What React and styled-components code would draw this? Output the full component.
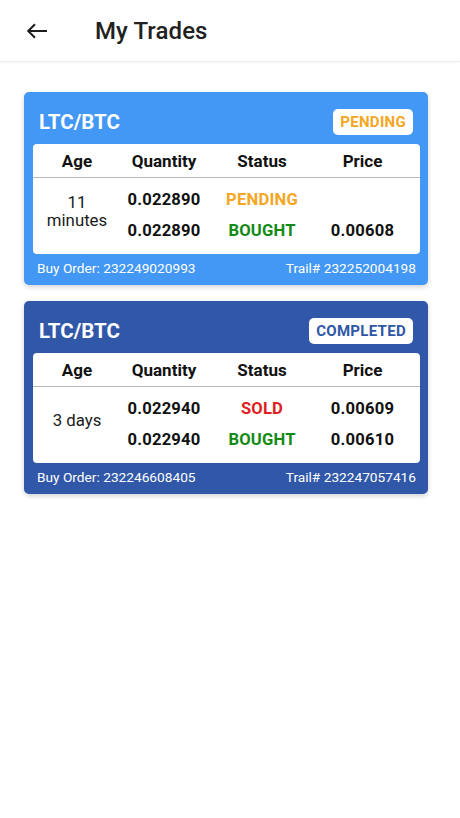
import React from 'react';
import styled, { createGlobalStyle } from 'styled-components';

const GlobalStyle = createGlobalStyle`
  *, *::before, *::after {
    box-sizing: border-box;
  }
  html, body {
    margin: 0;
    padding: 0;
    background: #ffffff;
    font-family: Roboto, "Noto Sans", Arial, sans-serif;
  }
`;

const Page = styled.div`
  width: 460px;
  min-height: 818px;
  background: #ffffff;
`;

const TopBar = styled.header`
  height: 62px;
  display: flex;
  align-items: center;
  padding-left: 26px;
  background: #ffffff;
  border-bottom: 1px solid #ececec;
  box-shadow: 0 1px 2px rgba(0, 0, 0, 0.04);
`;

const BackButton = styled.button`
  border: none;
  background: none;
  padding: 0;
  display: flex;
  align-items: center;
  cursor: pointer;
  margin-right: 47px;
`;

const Title = styled.h1`
  margin: 0;
  font-size: 24px;
  font-weight: 500;
  color: #212121;
  letter-spacing: 0.1px;
`;

const List = styled.main`
  padding: 30px 32px 0 24px;
  display: flex;
  flex-direction: column;
  gap: 16px;
`;

const Card = styled.section`
  background: ${p => p.$color};
  border-radius: 5px;
  padding: 0 8px 0 9px;
  box-shadow: 0 2px 5px rgba(0, 0, 0, 0.18);
`;

const CardHead = styled.div`
  height: 52px;
  display: flex;
  align-items: center;
  justify-content: space-between;
  padding: 7px 7px 0 6px;
`;

const Pair = styled.div`
  color: #ffffff;
  font-size: 20.5px;
  font-weight: 700;
  line-height: 24px;
`;

const Badge = styled.span`
  background: #ffffff;
  color: ${p => p.$color};
  font-size: 15px;
  font-weight: 700;
  padding: 0 7px;
  height: 26px;
  line-height: 26px;
  border-radius: 5px;
  letter-spacing: 0.3px;
`;

const Table = styled.div`
  background: #ffffff;
  border-radius: 4px;
  overflow: hidden;
`;

const Grid = styled.div`
  display: grid;
  grid-template-columns: 88px 86px 110px 1fr;
  padding-right: 12px;
  text-align: center;
`;

const HeadRow = styled(Grid)`
  height: 34px;
  align-items: center;
  border-bottom: 1px solid #b8b8b8;
`;

const HeadCell = styled.div`
  font-size: 17px;
  font-weight: 700;
  color: #111111;
  line-height: 20px;
`;

const Body = styled(Grid)`
  height: 76px;
  grid-template-rows: 31px 31px;
  padding-top: 6px;
  padding-bottom: 8px;
  align-items: center;
`;

const AgeCell = styled.div`
  grid-row: 1 / span 2;
  font-size: 16.8px;
  color: #1a1a1a;
  line-height: 18px;
  padding: 0 10px 8px;
`;

const Value = styled.div`
  font-size: 16.6px;
  font-weight: 700;
  line-height: 20px;
  color: ${p => p.$color || '#111111'};
  letter-spacing: 0.2px;
`;

const CardFoot = styled.div`
  height: 31px;
  display: flex;
  justify-content: space-between;
  align-items: center;
  padding: 0 4px 4px 4px;
  color: #ffffff;
  font-size: 13.7px;
  line-height: 16px;
`;

const STATUS_COLORS = {
  PENDING: '#f5a623',
  BOUGHT: '#138a13',
  SOLD: '#e01e1e',
  COMPLETED: '#2f57a6',
};

const trades = [
  {
    pair: 'LTC/BTC',
    state: 'PENDING',
    color: '#4397f5',
    age: '11 minutes',
    rows: [
      { qty: '0.022890', status: 'PENDING', price: '' },
      { qty: '0.022890', status: 'BOUGHT', price: '0.00608' },
    ],
    buyOrder: '232249020993',
    trail: '232252004198',
  },
  {
    pair: 'LTC/BTC',
    state: 'COMPLETED',
    color: '#3158a8',
    age: '3 days',
    rows: [
      { qty: '0.022940', status: 'SOLD', price: '0.00609' },
      { qty: '0.022940', status: 'BOUGHT', price: '0.00610' },
    ],
    buyOrder: '232246608405',
    trail: '232247057416',
  },
];

const BackArrow = () => (
  <svg width="22" height="16" viewBox="0 0 22 16" fill="none">
    <path d="M21 8H2.5M9 1.2L2.2 8L9 14.8" stroke="#1c1c1c" strokeWidth="2" />
  </svg>
);

const TradeCard = ({ trade }) => (
  <Card $color={trade.color}>
    <CardHead>
      <Pair>{trade.pair}</Pair>
      <Badge $color={STATUS_COLORS[trade.state]}>{trade.state}</Badge>
    </CardHead>
    <Table>
      <HeadRow>
        <HeadCell>Age</HeadCell>
        <HeadCell>Quantity</HeadCell>
        <HeadCell>Status</HeadCell>
        <HeadCell>Price</HeadCell>
      </HeadRow>
      <Body>
        <AgeCell>{trade.age}</AgeCell>
        {trade.rows.map((r, i) => (
          <React.Fragment key={i}>
            <Value>{r.qty}</Value>
            <Value $color={STATUS_COLORS[r.status]}>{r.status}</Value>
            <Value>{r.price}</Value>
          </React.Fragment>
        ))}
      </Body>
    </Table>
    <CardFoot>
      <span>Buy Order: {trade.buyOrder}</span>
      <span>Trail# {trade.trail}</span>
    </CardFoot>
  </Card>
);

const App = () => {
  return (
    <Page>
      <GlobalStyle />
      <TopBar>
        <BackButton aria-label="Back">
          <BackArrow />
        </BackButton>
        <Title>My Trades</Title>
      </TopBar>
      <List>
        {trades.map((t, i) => (
          <TradeCard key={i} trade={t} />
        ))}
      </List>
    </Page>
  );
};

export default App;
